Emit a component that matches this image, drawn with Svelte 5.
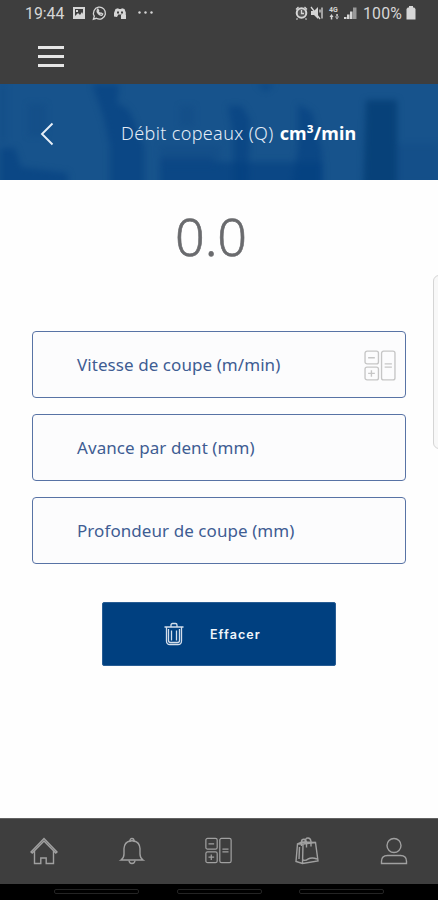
<script lang="ts">
	type Field = { id: string; label: string; hasCalculator?: boolean };

	const fields: Field[] = [
		{ id: 'speed', label: 'Vitesse de coupe (m/min)', hasCalculator: true },
		{ id: 'feed', label: 'Avance par dent (mm)' },
		{ id: 'depth', label: 'Profondeur de coupe (mm)' }
	];

	const tabs = ['home', 'alerts', 'calculator', 'shop', 'account'];

	let result = $state('0.0');

	function clearAll() {
		result = '0.0';
	}
</script>

{#snippet calculatorIcon()}
	<rect x="1" y="1" width="13" height="12.5" rx="2" />
	<rect x="1" y="16.500" width="13" height="12.5" rx="2" />
	<rect x="17" y="1" width="13" height="28" rx="2" />
	<path d="M4 7.5h6.5M4 22.7h6.5M7.2 19.5V26M20 13.5h7M20 16.5h7" />
{/snippet}

<div class="screen">
	<header class="top">
		<div class="status">
			<span class="status-text clock">19:44</span>
			<svg class="status-left" viewBox="0 0 85 16" aria-hidden="true">
				<path fill-rule="evenodd" d="M1 2h12v12H1zM3 4v7l3-3 2 2 2-3 1 2V4z" />
				<path d="M4 5h2v2H4z" />
				<path
					class="line"
					d="M21.4 14.2l.9-3A6 6 0 1 1 24.4 13.3zM25.2 5.2c-1 2 2.6 5.6 4.8 5l.7-1.3-1.7-1-1 .6-1.8-1.8.5-1-.8-1.5z"
				/>
				<path
					fill-rule="evenodd"
					d="M43.5 4l2.5-.8 1 .7h2l1-.7 2.5.8 1.3 3.5v3l-3 .5-1.5-1.5h-3L45 12l-3-.6V8zM45 6.5v2h2v-2zM49 6.5v2h2v-2z"
				/>
				<path d="M49 10h5v4h-5z" />
				<circle cx="67.5" cy="7.5" r="1.2" />
				<circle cx="73.5" cy="7.5" r="1.2" />
				<circle cx="79.5" cy="7.5" r="1.2" />
			</svg>
			<span class="spacer"></span>
			<svg class="status-right" viewBox="0 0 64 16" aria-hidden="true">
				<circle class="alarm" cx="7.500" cy="8" r="4.8" />
				<path class="line" d="M7.5 5v3.500H10M2 4.500L4.500 2M13 4.500L10.500 2M3.500 13.500l-1 1M11.500 13.500l1 1" />
				<path d="M17 6h3l4-4v12l-4-4h-3z" />
				<path class="line" d="M17 2l9 12M26 4.500v3M28 2.500v11" />
				<text x="35" y="7">4G</text>
				<path d="M35.500 12l2-3 2 3zM36.800 11h1.500v3.500h-1.500zM41 11.500l2 3 2-3zM42.300 9h1.500v3.500h-1.500z" />
				<path d="M50 12h2.500v2H50zM53 9.500h2.500V14H53zM56 6.500h2.500V14H56z" />
				<path class="faint" d="M59 2.500h3.500V14H59z" />
			</svg>
			<span class="status-text level">100%</span>
			<svg class="battery" viewBox="0 0 10 14" aria-hidden="true">
				<path d="M3 0h4v1.500h1.200L9.500 3v10.500h-9V3l1.300-1.500H3z" />
			</svg>
		</div>
		<button class="menu" type="button" aria-label="Menu">
			<span></span>
			<span></span>
			<span></span>
		</button>
	</header>

	<section class="banner">
		<!-- Faint workshop silhouette behind the title -->
		<svg class="banner-art" viewBox="0 0 438 96" preserveAspectRatio="none" aria-hidden="true">
			<path class="soft" d="M0 0h6v58H0zM28 20h18v32H28z" />
			<path class="deep" d="M0 64h15l6 19 47 6v20H0z" />
			<path class="deep" d="M92 0h27l-2 20q14 2 19 24l8 18v48h-34V62l-6-28z" />
			<path class="deep" d="M160 74h53v36h-53zM228 22h14l8 14-2 74h-15v-60zM257 0h17l-8 7zM298 20l14 8 10 40v42h-32l8-46z" />
			<path class="soft" d="M180 22h14v20h-14zM160 62h60v20h-60z" />
			<path class="deep" d="M213 78h110v32H213z" />
			<path class="dark" d="M366 16h31v94h-34z" />
			<path class="soft" d="M397 60h41v40h-41z" />
		</svg>
		<button class="back" type="button" aria-label="Retour">
			<svg viewBox="0 0 14 24"><path d="M12.500 1.500L2 12l10.500 10.500" /></svg>
		</button>
		<h1 class="title">Débit copeaux (Q) <strong>cm³/min</strong></h1>
	</section>

	<main class="content">
		<div class="result">{result}</div>

		<div class="fields">
			{#each fields as field (field.id)}
				<div class="field">
					<span class="field-label">{field.label}</span>
					{#if field.hasCalculator}
						<svg class="field-icon" viewBox="0 0 31 30" aria-hidden="true">
							{@render calculatorIcon()}
						</svg>
					{/if}
				</div>
			{/each}
		</div>

		<button class="clear" type="button" onclick={clearAll}>
			<svg class="trash" viewBox="0 0 20 24" aria-hidden="true">
				<path d="M.5 5h19M7 4.500V3q0-1.500 1.500-1.500h3Q13 1.500 13 3v1.500M2.500 5.500V19q0 3.500 3.500 3.500h8q3.500 0 3.500-3.500V5.500" />
				<path d="M7.500 8.500v10M12.500 8.500v10M4.500 7v11.500q0 2 2 2h7q2 0 2-2V7" />
			</svg>
			<span>Effacer</span>
		</button>
		<div class="edge-panel"></div>
	</main>

	<nav class="tabs">
		{#each tabs as tab (tab)}
			<button class="tab" type="button" aria-label={tab}>
				{#if tab === 'calculator'}
					<svg class="tab-calc" viewBox="0 0 31 30">{@render calculatorIcon()}</svg>
				{:else}
					<svg viewBox="0 0 28 28">
						{#if tab === 'home'}
							<path d="M1 15L14 1.500 27 15l-1.200 1L14 4 2.200 16zM4.500 14v12.500h6.300V21h5.400v5.500h7.300V14" />
						{:else if tab === 'alerts'}
							<path d="M3 23q3-2 3-6v-5.500Q6.500 5 12 4q0-2.500 2-2.500T16 4q5.500 1 6 7.500V17q0 4 3 6z" />
							<path d="M11 23.500q.3 3 3 3t3-3M11 4.500q3-1.500 6 0" />
						{:else if tab === 'shop'}
							<path d="M4.500 7L3 24.500l6.500 2L25 24 22.500 5.500 10 7zM10 7L9.500 26.500M4.500 7l4.500-2 13.500.5M4.500 7H10" />
							<path d="M8.500 9V4.500q0-2 2.500-2.200 2 .2 2.500 3.200v5M12 5.500Q12 1 15 1q2.500 0 3 3.500v5M10 23q3 1 5-1 4-2 9 0M6.500 10l-.5 12" />
						{:else}
							<circle cx="14" cy="8.500" r="7" />
							<path d="M1.500 26.500v-2.200q0-5.800 6-5.800h13q6 0 6 5.800v2.200z" />
						{/if}
					</svg>
				{/if}
			</button>
		{/each}
	</nav>

	<div class="gestures">
		<span></span>
		<span></span>
		<span></span>
	</div>
</div>

<style>
	:global(body) {
		margin: 0;
		background: #fff;
	}

	button {
		padding: 0;
		border: 0;
		background: none;
		font: inherit;
		color: inherit;
	}

	svg {
		display: block;
		flex-shrink: 0;
	}

	.screen {
		display: flex;
		flex-direction: column;
		width: 438px;
		height: 900px;
		overflow: hidden;
		font-family: 'Noto Sans', 'Open Sans', sans-serif;
		background: #fefefe;
	}

	.top {
		height: 84px;
		background: #3e3e3e;
	}

	.status {
		display: flex;
		align-items: center;
		height: 27px;
		padding: 0 22px 0 25px;
		box-sizing: border-box;
		fill: #d6d6d6;
		color: #d6d6d6;
	}

	.status-text {
		padding-top: 1px;
		font-family: Roboto, sans-serif;
		font-size: 15.8px;
		line-height: 26px;
		white-space: nowrap;
	}

	.clock {
		width: 47px;
	}

	.level {
		width: 42px;
		letter-spacing: 0.2px;
	}

	.status-left {
		width: 85px;
		height: 16px;
		margin-top: -1px;
	}

	.status-right {
		width: 64px;
		height: 16px;
		margin: -1px 5px 0 0;
	}

	.status-right text {
		font: 700 7px Roboto, sans-serif;
	}

	.status .line {
		fill: none;
		stroke: #d6d6d6;
		stroke-width: 1.3;
	}

	.alarm {
		fill: #555;
		stroke: #d6d6d6;
		stroke-width: 2;
	}

	.faint {
		fill: #999;
	}

	.battery {
		width: 10px;
		height: 14px;
		margin: -1px 0 0 1px;
	}

	.spacer {
		flex: 1;
	}

	.menu {
		display: flex;
		flex-direction: column;
		gap: 6px;
		margin: 19px 0 0 38px;
	}

	.menu span {
		width: 26px;
		height: 3px;
		background: #e6e6e6;
	}

	.banner {
		position: relative;
		display: flex;
		align-items: center;
		height: 96px;
		overflow: hidden;
		background: #17538c;
		color: #e4edf7;
	}

	.banner-art {
		position: absolute;
		inset: 0;
		width: 100%;
		height: 100%;
		overflow: visible;
		filter: blur(3px);
	}

	.banner-art .soft {
		fill: #0d4885;
		opacity: 0.35;
	}

	.banner-art .deep {
		fill: #034080;
		opacity: 0.6;
	}

	.banner-art .dark {
		fill: #043d74;
		opacity: 0.8;
	}

	.back {
		position: relative;
		margin: 3px 0 0 40px;
	}

	.back svg {
		width: 14px;
		height: 24px;
		fill: none;
		stroke: #e8f0f8;
		stroke-width: 1.9;
	}

	.title {
		position: relative;
		margin: 2px 0 0 67px;
		font-size: 18px;
		font-weight: 300;
		line-height: 26px;
		letter-spacing: 0.37px;
		white-space: nowrap;
	}

	.title strong {
		margin-left: 1px;
		font-weight: 700;
		letter-spacing: 0.1px;
		color: #fff;
	}

	.content {
		position: relative;
		display: flex;
		flex-direction: column;
		height: 638px;
		box-sizing: border-box;
		padding: 22px 32px 0;
	}

	.result {
		width: 358px;
		height: 70px;
		font-size: 52px;
		font-weight: 300;
		line-height: 68px;
		text-align: center;
		color: #6a6b6e;
		-webkit-text-stroke: 0.6px #6a6b6e;
	}

	.fields {
		display: flex;
		flex-direction: column;
		gap: 16px;
		margin-top: 59px;
	}

	.field {
		display: flex;
		align-items: center;
		justify-content: space-between;
		height: 67px;
		padding: 0 9px 0 44px;
		box-sizing: border-box;
		border: 1px solid #5873a5;
		border-radius: 4px;
		background: #fcfcfd;
		color: #3f5d93;
	}

	.field-label {
		font-size: 17px;
		line-height: 24px;
		letter-spacing: 0.07px;
		white-space: nowrap;
	}

	.field-icon {
		width: 32px;
		height: 31px;
		margin-top: 1px;
		fill: none;
		stroke: #c6c6c6;
		stroke-width: 1.3;
	}

	.clear {
		display: flex;
		align-items: center;
		align-self: flex-start;
		width: 234px;
		height: 64px;
		margin: 38px 0 0 70px;
		padding-left: 61px;
		box-sizing: border-box;
		border: 1px solid #285d94;
		border-radius: 2px;
		background: #004080;
		color: #f0f5fa;
		font-family: Inter, sans-serif;
		font-size: 12.5px;
		font-weight: 600;
		letter-spacing: 1.05px;
	}

	.trash {
		width: 20px;
		height: 24px;
		margin-right: 26px;
		fill: none;
		stroke: #d3deeb;
		stroke-width: 1.3;
	}

	.edge-panel {
		position: absolute;
		top: 95px;
		right: -10px;
		width: 15px;
		height: 174px;
		box-sizing: border-box;
		border: 1.5px solid #d5d5d5;
		border-radius: 6px;
		background: #f8f8f8;
	}

	.tabs {
		display: flex;
		justify-content: space-between;
		height: 66px;
		padding: 0 30px;
		box-sizing: border-box;
		border-top: 1px solid #626262;
		background: #3e3e3e;
	}

	.tab {
		display: flex;
		align-items: center;
		width: 28px;
		padding-bottom: 2px;
	}

	.tab svg {
		width: 28px;
		height: 28px;
		fill: none;
		stroke: #a0a0a0;
		stroke-width: 1.4;
	}

	.tab .tab-calc {
		width: 27px;
		height: 27px;
	}

	.gestures {
		display: flex;
		justify-content: space-between;
		height: 16px;
		padding: 5px 54px 0;
		box-sizing: border-box;
		background: #000;
	}

	.gestures span {
		width: 85px;
		height: 5px;
		box-sizing: border-box;
		border: 1px solid #242424;
		border-radius: 2px;
	}
</style>
